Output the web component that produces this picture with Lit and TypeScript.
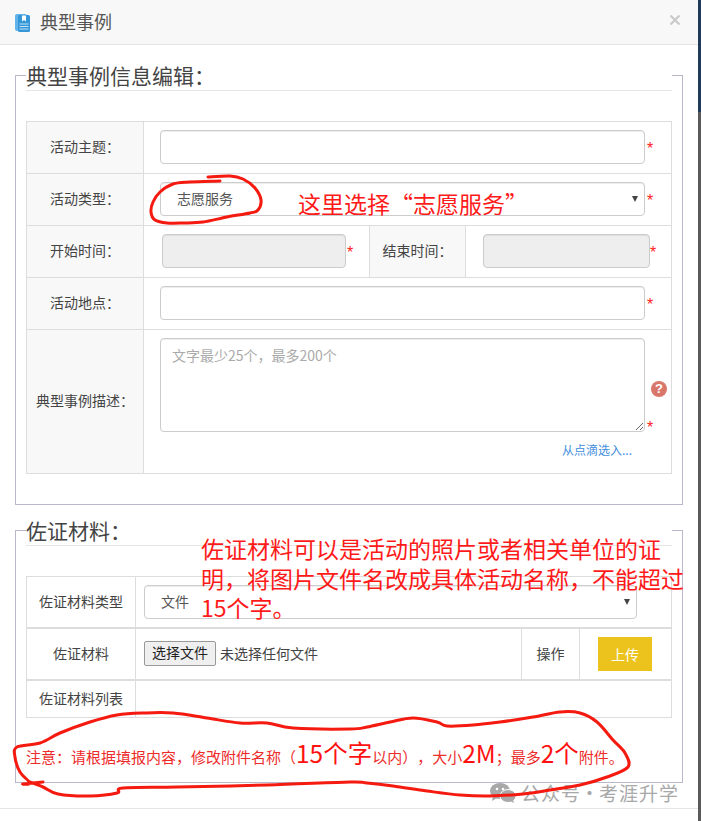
import { LitElement, html, css, svg } from "lit";
import { customElement } from "lit/decorators.js";

type P = [number, number];

function smooth(pts: P[]): string {
  let d = `M${pts[0][0]} ${pts[0][1]}`;
  for (let i = 0; i < pts.length - 1; i++) {
    const a = pts[Math.max(i - 1, 0)];
    const b = pts[i];
    const c = pts[i + 1];
    const e = pts[Math.min(i + 2, pts.length - 1)];
    const c1x = b[0] + (c[0] - a[0]) / 6;
    const c1y = b[1] + (c[1] - a[1]) / 6;
    const c2x = c[0] - (e[0] - b[0]) / 6;
    const c2y = c[1] - (e[1] - b[1]) / 6;
    d += `C${c1x.toFixed(1)} ${c1y.toFixed(1)} ${c2x.toFixed(1)} ${c2y.toFixed(1)} ${c[0]} ${c[1]}`;
  }
  return d;
}

const RING_SMALL: P[] = [
  [220, 181], [190, 182], [173, 184], [160, 192], [153, 202], [151, 212], [155, 220], [167, 223],
  [183, 223], [203, 222], [227, 217], [250, 213], [258, 210], [261, 200], [255, 188], [243, 179],
  [230, 176], [208, 177],
];

const RING_BIG: P[] = [
  [43, 782], [23, 784], [30, 783], [20, 772], [15, 757], [17, 747], [40, 743], [60, 733], [90, 722], [117, 715],
  [143, 713], [173, 713], [207, 718], [240, 723], [267, 723], [293, 728], [350, 729], [367, 727],
  [390, 722], [413, 718], [437, 722], [447, 726], [473, 725], [500, 722], [533, 717], [560, 712],
  [580, 713], [597, 722], [613, 740], [625, 753], [628, 767], [607, 777], [580, 785], [550, 790],
  [523, 794], [490, 796], [460, 795], [427, 791], [393, 786], [367, 783], [350, 782], [267, 785],
  [177, 787], [123, 788], [117, 793], [90, 796], [58, 794], [43, 787], [30, 782],
];

@customElement("app-root")
export class AppRoot extends LitElement {
  static styles = css`
    :host {
      display: block;
      position: relative;
      width: 701px;
      height: 821px;
      overflow: hidden;
      background: #fff;
      font-family: "Noto Sans CJK SC", "Liberation Sans", sans-serif;
      color: #444;
      text-spacing-trim: space-all;
    }
    .page { display: flex; height: 821px; }
    .dialog { width: 698px; flex: none; }
    .strip { flex: 1; background: linear-gradient(#1f3a5a 0 112px, #5a5a5a 112px 100%); }
    .head {
      display: flex;
      align-items: center;
      height: 44px;
      background: #f8f8f8;
      border-bottom: 1px solid #e5e5e5;
      padding: 0 18px 0 15px;
    }
    .head h1 { margin: 0 0 2px 10px; flex: 1; font-size: 18px; font-weight: 400; color: #555; line-height: 42px; }
    .book { display: block; margin-top: 1px; }
    .close { display: block; margin-top: -4px; }
    fieldset {
      margin: 15px 15px 0;
      padding: 0 10px 30px;
      border: 1px solid #b9b9cc;
      min-width: 0;
    }
    fieldset + fieldset { margin-top: 10px; padding-bottom: 0; }
    legend {
      box-sizing: border-box;
      width: 100%;
      height: 31px;
      padding: 0;
      font-size: 21px;
      line-height: 30px;
      color: #444;
      border-bottom: 1px solid #e5e5e5;
    }
    .table { margin-top: 30px; border: 1px solid #ddd; font-size: 14px; }
    .row { display: grid; height: 51px; border-bottom: 1px solid #ddd; }
    .row:last-child { border-bottom: 0; }
    .r2 { grid-template-columns: 117px 1fr; }
    .r4 { grid-template-columns: 117px 226px 96px 1fr; }
    .tall { height: 143px; }
    .lab {
      display: flex;
      align-items: center;
      justify-content: center;
      background: #f8f8f8;
      border-right: 1px solid #ddd;
      padding-bottom: 3px;
    }
    .cell { display: flex; align-items: flex-start; padding: 8px 0 0 16px; min-width: 0; }
    .cell.d1 { padding-left: 18px; border-right: 1px solid #ddd; }
    .cell.d2 { padding-left: 17px; }
    input, select, textarea {
      box-sizing: border-box;
      display: block;
      margin: 0;
      height: 34px;
      border: 1px solid #ccc;
      border-radius: 4px;
      background: #fff;
      box-shadow: inset 0 1px 1px rgba(0, 0, 0, 0.075);
      font: 14px "Noto Sans CJK SC", sans-serif;
      color: #555;
      outline: none;
    }
    .w485 { width: 485px; }
    .w184 { width: 184px; }
    .w167 { width: 167px; }
    input:disabled { background: #eee; }
    .sel { position: relative; display: block; }
    select { appearance: none; width: 100%; padding: 0 0 2px 16px; }
    .sel::after {
      content: "";
      position: absolute;
      right: 7px;
      top: 14px;
      border: 3.5px solid transparent;
      border-top: 6px solid #444;
      border-bottom: 0;
    }
    textarea { width: 485px; height: 94px; padding: 6px 11px; line-height: 20px; }
    textarea::placeholder { color: #aaa; opacity: 1; }
    .star { flex: none; width: 7px; margin-left: 2px; font: 16px/16px "Liberation Sans", sans-serif; color: #f22; padding-top: 11px; }
    .d1 .star { margin-left: 1px; }
    .d2 .star { margin-left: 0; }
    .hold { display: flex; flex-direction: column; padding: 8px 0 0 16px; }
    .hold .top { display: flex; align-items: flex-start; }
    .hold .star { margin-top: 71px; }
    .q {
      flex: none;
      width: 16px;
      height: 16px;
      margin: 43px 0 0 -3px;
      border-radius: 50%;
      background: #d9776b;
      color: #fff;
      font: bold 13px/16px "Liberation Sans", sans-serif;
      text-align: center;
    }
    .more { margin: 5px 39px 0 0; text-align: right; font-size: 12px; line-height: 18px; color: #3f8ede; }
    .t2 .row { border-bottom-width: 2px; height: 50px; }
    .t2 .row:last-child { height: 36px; border-bottom: 0; }
    .g2 { grid-template-columns: 109px 1fr; }
    .g4 { grid-template-columns: 109px 386px 58px 1fr; }
    .t2 .lab { background: #fff; padding-bottom: 2px; }
    .t2 .cell { padding-left: 8px; }
    .w493 { width: 493px; }
    .t2 .cell.file { align-items: center; padding: 0 0 2px 8px; border-right: 1px solid #ddd; }
    .pick {
      box-sizing: border-box;
      width: 72px;
      height: 25px;
      padding: 0 0 2px;
      margin-right: 4px;
      background: #efefef;
      border: 1px solid #999;
      border-radius: 2px;
      font: 14px "Noto Sans CJK SC", sans-serif;
      color: #222;
    }
    .up {
      width: 54px;
      height: 34px;
      margin-left: 18px;
      padding: 0;
      border: 0;
      background: #ecc31c;
      color: #fff;
      font: 14px "Noto Sans CJK SC", sans-serif;
    }
    .t2 .cell.act { padding: 8px 0 0 0; }
    .note {
      height: 64px;
      line-height: 69px;
      font-size: 15px;
      color: #ee2b2b;
      white-space: nowrap;
    }
    .note b { font-weight: 400; font-size: 24.5px; color: #f11; }
    .rule { height: 25px; border-bottom: 1px solid #e5e5e5; }
    .anno { position: absolute; color: #ff1a1a; font-size: 23px; line-height: 29.5px; white-space: nowrap; }
    .a1 { left: 298px; top: 189px; }
    .a2 { left: 201px; top: 534px; }
    .rings { position: absolute; left: 0; top: 0; pointer-events: none; }
    .mark {
      position: absolute;
      left: 490px;
      top: 780px;
      display: flex;
      align-items: center;
      gap: 5px;
      font-size: 19px;
      line-height: 26px;
      letter-spacing: 1px;
      color: #a8a8a8;
      white-space: nowrap;
    }
    .mark svg { display: block; }
    .dot { margin: 0 -1px; }
  `;

  private star() {
    return html`<span class="star">*</span>`;
  }

  render() {
    return html`
      <div class="page">
        <div class="dialog">
          <header class="head">
            <svg class="book" width="15" height="19" viewBox="0 0 15 19">
              <rect x="0" y="1" width="12" height="17" rx="2" fill="#62b3ea"/>
              <rect x="3" y="2" width="12" height="17" rx="1.5" fill="#3597d8"/>
              <path d="M7 2.5h4v6l-2-1.5-2 1.5z" fill="#fff"/>
              <path d="M4.5 11h9M4.5 13.5h9M4.5 16h9" stroke="#bfe0f6" stroke-width="1"/>
            </svg>
            <h1>典型事例</h1>
            <svg class="close" width="10" height="10" viewBox="0 0 10 10">
              <path d="M0.5 0.5l9 9M9.5 0.5l-9 9" stroke="#c8c8c8" stroke-width="2" fill="none"/>
            </svg>
          </header>

          <fieldset>
            <legend>典型事例信息编辑&#xFF1A;</legend>
            <div class="table">
              <div class="row r2">
                <div class="lab">活动主题&#xFF1A;</div>
                <div class="cell"><input class="w485" type="text" />${this.star()}</div>
              </div>
              <div class="row r2">
                <div class="lab">活动类型&#xFF1A;</div>
                <div class="cell">
                  <span class="sel w485"><select><option>志愿服务</option></select></span>${this.star()}
                </div>
              </div>
              <div class="row r4">
                <div class="lab">开始时间&#xFF1A;</div>
                <div class="cell d1"><input class="w184" type="text" disabled />${this.star()}</div>
                <div class="lab">结束时间&#xFF1A;</div>
                <div class="cell d2"><input class="w167" type="text" disabled />${this.star()}</div>
              </div>
              <div class="row r2">
                <div class="lab">活动地点&#xFF1A;</div>
                <div class="cell"><input class="w485" type="text" />${this.star()}</div>
              </div>
              <div class="row r2 tall">
                <div class="lab">典型事例描述&#xFF1A;</div>
                <div class="hold">
                  <div class="top">
                    <textarea placeholder="文字最少25个&#xFF0C;最多200个"></textarea>
                    ${this.star()}
                    <span class="q">?</span>
                  </div>
                  <div class="more">从点滴选入...</div>
                </div>
              </div>
            </div>
          </fieldset>

          <fieldset>
            <legend>佐证材料&#xFF1A;</legend>
            <div class="table t2">
              <div class="row g2">
                <div class="lab">佐证材料类型</div>
                <div class="cell"><span class="sel w493"><select><option>文件</option></select></span></div>
              </div>
              <div class="row g4">
                <div class="lab">佐证材料</div>
                <div class="cell file"><button class="pick">选择文件</button><span>未选择任何文件</span></div>
                <div class="lab">操作</div>
                <div class="cell act"><button class="up">上传</button></div>
              </div>
              <div class="row g2">
                <div class="lab">佐证材料列表</div>
                <div></div>
              </div>
            </div>
            <div class="note">注意&#xFF1A;请根据填报内容&#xFF0C;修改附件名称&#xFF08;<b>15个字</b>以内&#xFF09;&#xFF0C;大小<b>2M</b>&#xFF1B;最多<b>2个</b>附件。</div>
          </fieldset>
          <div class="rule"></div>
        </div>
        <div class="strip"></div>
      </div>

      <div class="mark">
        <svg width="26" height="20" viewBox="0 0 26 20">
          <ellipse cx="10" cy="8" rx="10" ry="8" fill="#a8a8a8"/>
          <path d="M3 13l-1 5 5-3z" fill="#a8a8a8"/>
          <ellipse cx="18" cy="13" rx="8" ry="6.5" fill="#a8a8a8" stroke="#fff" stroke-width="1"/>
          <path d="M23 17l1 3-4-2z" fill="#a8a8a8"/>
          <circle cx="7" cy="6" r="1.3" fill="#fff"/><circle cx="13" cy="6" r="1.3" fill="#fff"/>
          <circle cx="15" cy="12" r="1.1" fill="#fff"/><circle cx="21" cy="12" r="1.1" fill="#fff"/>
        </svg>
        <span>公众号<span class="dot">·</span>考涯升学</span>
      </div>

      <svg class="rings" width="701" height="821" viewBox="0 0 701 821">
        ${svg`<path d=${smooth(RING_SMALL)} fill="none" stroke="#f51a10" stroke-width="3" stroke-linecap="round"/>`}
        ${svg`<path d=${smooth(RING_BIG)} fill="none" stroke="#f51a10" stroke-width="3" stroke-linecap="round"/>`}
      </svg>
      <div class="anno a1">这里选择“志愿服务”</div>
      <div class="anno a2">佐证材料可以是活动的照片或者相关单位的证<br />明&#xFF0C;将图片文件名改成具体活动名称&#xFF0C;不能超过<br />15个字。</div>
    `;
  }
}
